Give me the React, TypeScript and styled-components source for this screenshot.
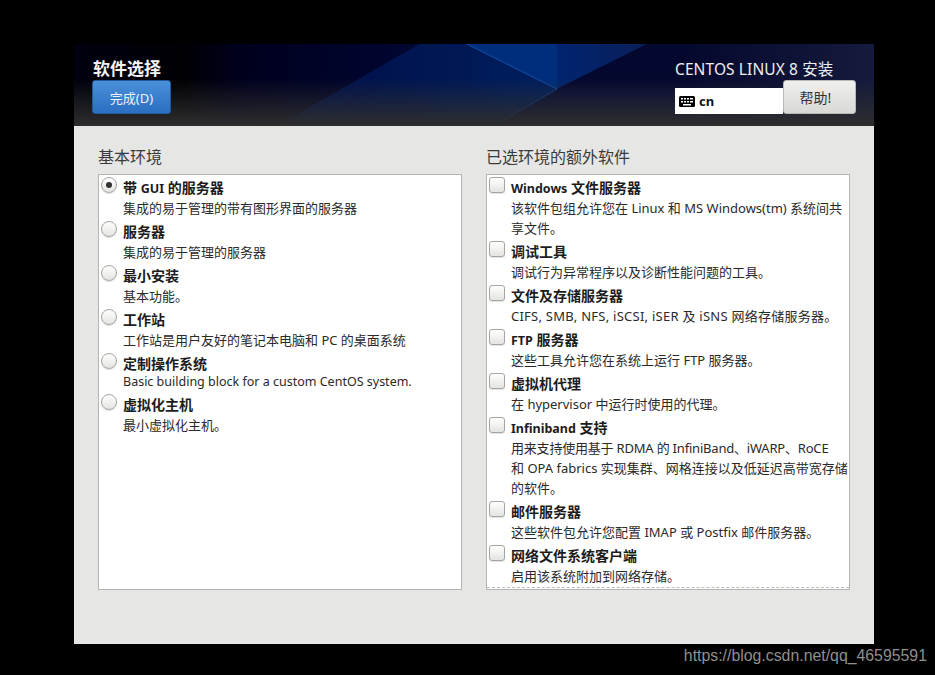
import React from 'react';
import styled, { createGlobalStyle } from 'styled-components';

const GlobalStyle = createGlobalStyle`
  html, body {
    margin: 0;
    padding: 0;
    background: #000;
    overflow: hidden;
  }
  * {
    box-sizing: border-box;
  }
`;

const FONT = `"Noto Sans", "Noto Sans CJK SC", sans-serif`;

const Page = styled.div`
  width: 935px;
  height: 675px;
  padding: 44px 0 0 74px;
  background: #000;
  font-family: ${FONT};
`;

const Window = styled.main`
  width: 800px;
  height: 600px;
  display: flex;
  flex-direction: column;
  background: #e6e6e4;
`;

const Header = styled.header`
  position: relative;
  height: 82px;
  display: flex;
  justify-content: space-between;
  padding: 15px 18px 0 18px;
  background: #00051a;
  overflow: hidden;
`;

const HeaderArt = styled.svg`
  position: absolute;
  inset: 0;
`;

const HeaderLeft = styled.div`
  position: relative;
  display: flex;
  flex-direction: column;
`;

const SpokeTitle = styled.h1`
  margin: 0 0 0 1px;
  height: 21px;
  font-size: 17px;
  line-height: 19px;
  font-weight: 700;
  color: #f4f4f4;
  white-space: nowrap;
`;

const DoneButton = styled.button`
  width: 79px;
  height: 34px;
  padding: 0;
  font-family: inherit;
  font-size: 13px;
  color: #eef3fa;
  background: linear-gradient(#4a90d9, #2a6fc0);
  border: 1px solid #1f5a9e;
  border-radius: 3px;
`;

const HeaderRight = styled.div`
  position: relative;
  width: 181px;
  display: flex;
  flex-direction: column;
`;

const ProductTitle = styled.div`
  height: 21px;
  font-size: 15.5px;
  line-height: 21px;
  letter-spacing: 0.1px;
  color: #eeeeee;
  white-space: nowrap;
`;

const HeaderControls = styled.div`
  display: flex;
  align-items: flex-end;
  height: 34px;
`;

const LayoutField = styled.div`
  width: 108px;
  height: 26px;
  display: flex;
  align-items: center;
  gap: 4px;
  padding-left: 4px;
  background: #fff;
  color: #111;
  font-size: 13px;
  font-weight: 700;
`;

const HelpButton = styled.button`
  width: 73px;
  height: 34px;
  padding: 0 8px 0 0;
  font-family: inherit;
  font-size: 14px;
  color: #333;
  background: linear-gradient(#f0f0ee, #d8d8d5);
  border: 1px solid #b8b8b4;
  border-radius: 3px;
`;

const Body = styled.div`
  display: grid;
  grid-template-columns: 364px 364px;
  column-gap: 24px;
  padding: 20px 24px 0 24px;
`;

const Column = styled.section`
  display: flex;
  flex-direction: column;
`;

const ColumnTitle = styled.h2`
  margin: 0;
  height: 28px;
  font-size: 16px;
  line-height: 23px;
  font-weight: 400;
  color: #3a3a3a;
  white-space: nowrap;
`;

const ListBox = styled.div`
  position: relative;
  height: 416px;
  padding: 2px 2px 0 2px;
  background: #fff;
  border: 1px solid #b4b4b0;
  overflow: hidden;
`;

const OverflowMark = styled.div`
  position: absolute;
  left: 0;
  right: 0;
  bottom: 1px;
  border-bottom: 1px dashed #bdbdb9;
`;

const Row = styled.div`
  display: flex;
  gap: 6px;
  margin-bottom: 3px;
`;

const Radio = styled.span<{ $checked?: boolean }>`
  flex: none;
  width: 16px;
  height: 16px;
  display: flex;
  align-items: center;
  justify-content: center;
  border: 1px solid #a5a5a1;
  border-radius: 50%;
  background: linear-gradient(#ffffff, #e4e4e1);
  box-shadow: 0 1px 1px rgba(0, 0, 0, 0.12);

  &::after {
    content: '';
    display: ${(p) => (p.$checked ? 'block' : 'none')};
    width: 6px;
    height: 6px;
    border-radius: 50%;
    background: #333;
  }
`;

const Checkbox = styled.span`
  flex: none;
  width: 16px;
  height: 16px;
  border: 1px solid #a5a5a1;
  border-radius: 3px;
  background: linear-gradient(#ffffff, #e4e4e1);
  box-shadow: 0 1px 1px rgba(0, 0, 0, 0.12);
`;

const RowText = styled.div`
  padding-top: 1px;
  min-width: 0;
`;

const RowName = styled.div`
  height: 20px;
  font-size: 14px;
  line-height: 20px;
  font-weight: 700;
  color: #1c1c1c;
  white-space: nowrap;
`;

const LatinRun = styled.span`
  font-size: 12.5px;
`;

const RowDesc = styled.div<{ $track?: number }>`
  font-size: 13px;
  line-height: 20px;
  letter-spacing: ${(p) => p.$track ?? 0}px;
  color: #2a2a2a;
  white-space: nowrap;
`;

const ShortDesc = styled.div`
  height: 17px;
  font-size: 12.5px;
  line-height: 16px;
  color: #2a2a2a;
  white-space: nowrap;
`;

const Watermark = styled.div`
  width: 935px;
  margin-left: -74px;
  padding-right: 8px;
  text-align: right;
  font-family: "Liberation Sans", sans-serif;
  font-size: 15.85px;
  line-height: 24px;
  color: #8f8f8f;
`;

const KeyboardIcon = () => (
  <svg width="16" height="11" viewBox="0 0 16 11">
    <rect width="16" height="11" rx="1.5" fill="#000" />
    <g fill="#fff">
      <rect x="2" y="2" width="2" height="1.5" />
      <rect x="5" y="2" width="2" height="1.5" />
      <rect x="8" y="2" width="2" height="1.5" />
      <rect x="11" y="2" width="3" height="1.5" />
      <rect x="2" y="5" width="2" height="1.5" />
      <rect x="5" y="5" width="2" height="1.5" />
      <rect x="8" y="5" width="2" height="1.5" />
      <rect x="11" y="5" width="3" height="1.5" />
      <rect x="4" y="8" width="8" height="1.5" />
    </g>
  </svg>
);

const HeaderBackdrop = () => (
  <HeaderArt width="800" height="82" viewBox="0 0 800 82">
    <defs>
      <linearGradient id="sweep" x1="0" x2="1" y1="0" y2="0">
        <stop offset="0" stopColor="#00000f" />
        <stop offset="0.14" stopColor="#000004" />
        <stop offset="0.2" stopColor="#00001c" />
        <stop offset="0.38" stopColor="#00052e" />
        <stop offset="0.6" stopColor="#00103f" />
        <stop offset="1" stopColor="#0d1233" />
      </linearGradient>
      <linearGradient id="midBlue" x1="0" x2="1" y1="0" y2="0">
        <stop offset="0" stopColor="#000e48" />
        <stop offset="1" stopColor="#00205f" />
      </linearGradient>
      <linearGradient id="rightFacet" x1="0" x2="1" y1="0" y2="0">
        <stop offset="0" stopColor="#012470" />
        <stop offset="1" stopColor="#0a1f58" />
      </linearGradient>
      <linearGradient id="rightDark" x1="0" x2="1" y1="0" y2="0">
        <stop offset="0.5" stopColor="#05082e" />
        <stop offset="1" stopColor="#141b3c" />
      </linearGradient>
      <linearGradient id="fade" x1="0" x2="0" y1="0" y2="1">
        <stop offset="0.42" stopColor="#2e2e2e" stopOpacity="0" />
        <stop offset="1" stopColor="#2e2e2e" stopOpacity="1" />
      </linearGradient>
    </defs>
    <rect width="800" height="82" fill="url(#sweep)" />
    <polygon points="236,63 346,0 393,0 483,45 420,82 205,82" fill="url(#midBlue)" />
    <polygon points="300,26 346,0 393,0 483,45 420,82 250,82" fill="url(#midBlue)" opacity="0.6" />
    <polygon points="393,0 483,0 483,45" fill="#002e7c" />
    <polygon points="483,0 573,0 483,45" fill="url(#rightFacet)" />
    <polygon points="483,45 573,0 800,0 800,82 420,82" fill="url(#rightDark)" />
    <polygon points="483,45 640,45 640,82 420,82" fill="#071346" opacity="0.4" />
    <line x1="393" y1="0" x2="483" y2="45" stroke="#1a5cb8" strokeWidth="1" opacity="0.8" />
    <line x1="483" y1="45" x2="420" y2="82" stroke="#1a5cb8" strokeWidth="1" opacity="0.6" />
    <rect width="800" height="82" fill="url(#fade)" />
  </HeaderArt>
);

// bold names mix CJK at 14px with slightly smaller Latin runs
const renderName = (name: string) =>
  name.split(/([A-Za-z]+)/).map((part, i) =>
    /[A-Za-z]/.test(part) ? <LatinRun key={i}>{part}</LatinRun> : part
  );

const environments = [
  { name: '带 GUI 的服务器', desc: '集成的易于管理的带有图形界面的服务器', checked: true },
  { name: '服务器', desc: '集成的易于管理的服务器' },
  { name: '最小安装', desc: '基本功能。' },
  { name: '工作站', desc: '工作站是用户友好的笔记本电脑和 PC 的桌面系统' },
  { name: '定制操作系统', desc: 'Basic building block for a custom CentOS system.', short: true },
  { name: '虚拟化主机', desc: '最小虚拟化主机。' },
];

const addons: { name: string; desc: { text: string; track?: number }[] }[] = [
  {
    name: 'Windows 文件服务器',
    desc: [{ text: '该软件包组允许您在 Linux 和 MS Windows(tm) 系统间共' }, { text: '享文件。' }],
  },
  { name: '调试工具', desc: [{ text: '调试行为异常程序以及诊断性能问题的工具。' }] },
  {
    name: '文件及存储服务器',
    desc: [{ text: 'CIFS, SMB, NFS, iSCSI, iSER 及 iSNS 网络存储服务器。', track: 0.25 }],
  },
  { name: 'FTP 服务器', desc: [{ text: '这些工具允许您在系统上运行 FTP 服务器。' }] },
  { name: '虚拟机代理', desc: [{ text: '在 hypervisor 中运行时使用的代理。' }] },
  {
    name: 'Infiniband 支持',
    desc: [
      { text: '用来支持使用基于 RDMA 的 InfiniBand、iWARP、RoCE', track: -0.2 },
      { text: '和 OPA fabrics 实现集群、网格连接以及低延迟高带宽存储' },
      { text: '的软件。' },
    ],
  },
  { name: '邮件服务器', desc: [{ text: '这些软件包允许您配置 IMAP 或 Postfix 邮件服务器。' }] },
  { name: '网络文件系统客户端', desc: [{ text: '启用该系统附加到网络存储。' }] },
];

export default function App() {
  return (
    <Page>
      <GlobalStyle />
      <Window>
        <Header>
          <HeaderBackdrop />
          <HeaderLeft>
            <SpokeTitle>软件选择</SpokeTitle>
            <DoneButton>完成(D)</DoneButton>
          </HeaderLeft>
          <HeaderRight>
            <ProductTitle>CENTOS LINUX 8 安装</ProductTitle>
            <HeaderControls>
              <LayoutField>
                <KeyboardIcon />
                cn
              </LayoutField>
              <HelpButton>帮助!</HelpButton>
            </HeaderControls>
          </HeaderRight>
        </Header>
        <Body>
          <Column>
            <ColumnTitle>基本环境</ColumnTitle>
            <ListBox>
              {environments.map((env) => (
                <Row key={env.name}>
                  <Radio $checked={env.checked} />
                  <RowText>
                    <RowName>{renderName(env.name)}</RowName>
                    {env.short ? <ShortDesc>{env.desc}</ShortDesc> : <RowDesc>{env.desc}</RowDesc>}
                  </RowText>
                </Row>
              ))}
            </ListBox>
          </Column>
          <Column>
            <ColumnTitle>已选环境的额外软件</ColumnTitle>
            <ListBox>
              {addons.map((addon) => (
                <Row key={addon.name}>
                  <Checkbox />
                  <RowText>
                    <RowName>{renderName(addon.name)}</RowName>
                    {addon.desc.map((line) => (
                      <RowDesc key={line.text} $track={line.track}>
                        {line.text}
                      </RowDesc>
                    ))}
                  </RowText>
                </Row>
              ))}
              <OverflowMark />
            </ListBox>
          </Column>
        </Body>
      </Window>
      <Watermark>https://blog.csdn.net/qq_46595591</Watermark>
    </Page>
  );
}
